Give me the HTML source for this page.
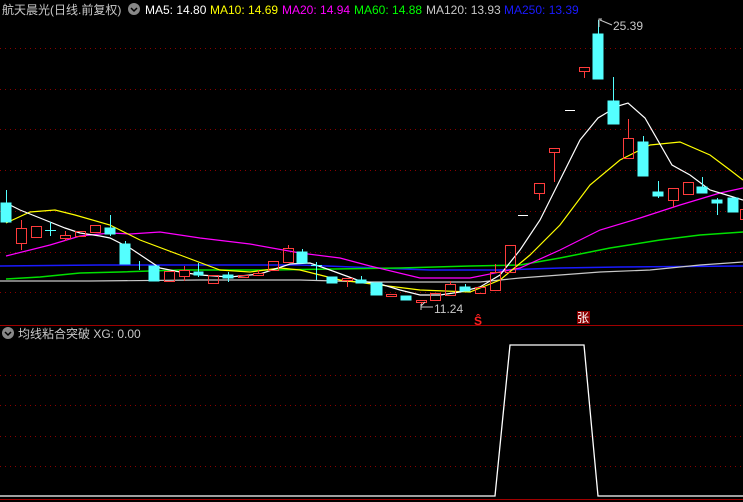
<!DOCTYPE html>
<html><head><meta charset="utf-8"><style>
html,body{margin:0;padding:0;background:#000;width:743px;height:502px;overflow:hidden}
svg{display:block}
text{font-family:"Liberation Sans","Noto Sans CJK SC",sans-serif;font-size:12px}
</style></head><body>
<svg width="743" height="502" viewBox="0 0 743 502" xmlns="http://www.w3.org/2000/svg">
<g stroke="#8b0000" stroke-dasharray="1,4" stroke-width="1">
<line x1="0" y1="48.5" x2="743" y2="48.5"/><line x1="0" y1="89.5" x2="743" y2="89.5"/>
<line x1="0" y1="129.5" x2="743" y2="129.5"/><line x1="0" y1="170.5" x2="743" y2="170.5"/>
<line x1="0" y1="211.5" x2="743" y2="211.5"/><line x1="0" y1="252.5" x2="743" y2="252.5"/>
<line x1="0" y1="292.5" x2="743" y2="292.5"/>
<line x1="0" y1="375.5" x2="743" y2="375.5"/><line x1="0" y1="405.5" x2="743" y2="405.5"/>
<line x1="0" y1="436.5" x2="743" y2="436.5"/><line x1="0" y1="466.5" x2="743" y2="466.5"/>
</g>
<line x1="0" y1="325.5" x2="743" y2="325.5" stroke="#a00000"/>
<line x1="0" y1="499.5" x2="743" y2="499.5" stroke="#a00000"/>
<!-- MAs -->
<g fill="none" stroke-width="1.2">
<polyline stroke="#1a1aff" stroke-width="1.5" points="0,266 100,265 200,265 300,265 430,270 500,270 560,268 620,267 743,266"/>
<polyline stroke="#c8c8c8" points="0,281 90,281 200,280 300,280 370,282 480,282 520,278 560,275 600,272 650,270 700,265 743,262"/>
<polyline stroke="#00e000" stroke-width="1.5" points="6,279 40,277 80,273 120,272 180,270 270,270 400,268 470,266 520,265 560,258 610,248 660,240 700,235 743,232"/>
<polyline stroke="#ff00ff" points="6,256 50,245 80,236 110,233 130,234 160,232 200,238 250,244 300,253 340,258 370,266 420,278 470,278 520,268 560,250 600,230 640,218 680,205 720,193 743,188"/>
<polyline stroke="#ffff00" points="6,223 30,212 55,210 75,215 110,225 140,240 180,255 220,270 250,272 280,268 300,270 340,280 380,285 420,290 470,292 500,280 530,255 560,225 590,185 620,160 650,145 680,142 710,155 730,170 743,180"/>
<polyline stroke="#ffffff" points="6,203 20,210 40,218 65,228 80,233 100,236 110,238 130,248 145,258 160,268 180,272 200,275 230,277 260,274 290,264 310,263 330,270 360,281 380,284 400,290 420,295 440,295 460,292 480,287 500,275 520,250 540,220 560,180 580,140 598,118 618,106 628,103 645,118 672,165 690,175 710,190 730,196 743,200"/>
</g>
<!-- candles: cyan filled -->
<g fill="#54ffff" stroke="#54ffff">
<line x1="6.5" y1="190" x2="6.5" y2="203"/><rect x="1" y="203" width="10" height="19"/>
<line x1="50.5" y1="222" x2="50.5" y2="236"/><line x1="45" y1="230.5" x2="56" y2="230.5"/>
<line x1="110.5" y1="215" x2="110.5" y2="236"/><rect x="105" y="228" width="10" height="6"/>
<line x1="125.5" y1="241" x2="125.5" y2="244"/><rect x="120" y="244" width="10" height="20"/>
<line x1="139.5" y1="261" x2="139.5" y2="270"/>
<rect x="149" y="266" width="10" height="15"/>
<line x1="198.5" y1="263" x2="198.5" y2="277"/><rect x="194" y="272" width="9" height="3"/>
<line x1="228.5" y1="272" x2="228.5" y2="282"/><rect x="223" y="275" width="10" height="3"/>
<line x1="302.5" y1="249" x2="302.5" y2="263"/><rect x="297" y="252" width="10" height="11"/>
<line x1="316.5" y1="262" x2="316.5" y2="280"/><line x1="311" y1="265.5" x2="322" y2="265.5"/>
<rect x="327" y="277" width="10" height="6"/>
<line x1="361.5" y1="276" x2="361.5" y2="283"/><rect x="356" y="280" width="10" height="3"/>
<rect x="371" y="283" width="11" height="12"/>
<rect x="401" y="296" width="10" height="4"/>
<line x1="465.5" y1="284" x2="465.5" y2="291"/><rect x="460" y="287" width="10" height="4"/>
<line x1="598.5" y1="20" x2="598.5" y2="34"/><rect x="593" y="34" width="10" height="45"/>
<line x1="613.5" y1="77" x2="613.5" y2="101"/><rect x="608" y="101" width="11" height="23"/>
<line x1="643.5" y1="136" x2="643.5" y2="142"/><rect x="638" y="142" width="10" height="34"/>
<line x1="658.5" y1="181" x2="658.5" y2="198"/><rect x="653" y="192" width="10" height="4"/>
<line x1="702.5" y1="177" x2="702.5" y2="193"/><rect x="697" y="187" width="10" height="6"/>
<line x1="717.5" y1="198" x2="717.5" y2="215"/><rect x="712" y="200" width="10" height="3"/>
<rect x="728" y="198" width="10" height="14"/>
</g>
<!-- red hollow -->
<g fill="none" stroke="#ff3c3c">
<line x1="21.5" y1="220" x2="21.5" y2="250"/><rect x="16.5" y="228.5" width="10" height="15" fill="#000"/>
<rect x="31.5" y="226.5" width="10" height="11"/>
<line x1="65.5" y1="231" x2="65.5" y2="241"/><rect x="60.5" y="235.5" width="10" height="3" fill="#000"/>
<rect x="75.5" y="231.5" width="10" height="5"/>
<rect x="90.5" y="225.5" width="10" height="7"/>
<rect x="164.5" y="271.5" width="10" height="10"/>
<line x1="184.5" y1="266" x2="184.5" y2="281"/><rect x="179.5" y="270.5" width="10" height="6" fill="#000"/>
<rect x="208.5" y="275.5" width="10" height="8"/>
<rect x="238.5" y="275.5" width="10" height="2"/>
<line x1="258.5" y1="270" x2="258.5" y2="276"/><rect x="253.5" y="273.5" width="10" height="2" fill="#000"/>
<rect x="268.5" y="261.5" width="10" height="9"/>
<line x1="288.5" y1="245" x2="288.5" y2="248"/><rect x="283.5" y="248.5" width="10" height="14"/>
<line x1="347.5" y1="278" x2="347.5" y2="287"/><rect x="342.5" y="278.5" width="10" height="2" fill="#000"/>
<rect x="386.5" y="294.5" width="10" height="2"/>
<line x1="421.5" y1="300" x2="421.5" y2="305"/><rect x="416.5" y="300.5" width="10" height="2" fill="#000"/>
<rect x="430.5" y="293.5" width="10" height="7"/>
<line x1="450.5" y1="281" x2="450.5" y2="284"/><rect x="445.5" y="284.5" width="10" height="11"/>
<rect x="475.5" y="287.5" width="10" height="6"/>
<line x1="495.5" y1="264" x2="495.5" y2="272"/><rect x="490.5" y="272.5" width="10" height="18"/>
<rect x="505.5" y="245.5" width="10" height="27"/>
<line x1="539.5" y1="193" x2="539.5" y2="200"/><rect x="534.5" y="183.5" width="10" height="10"/>
<line x1="554.5" y1="152" x2="554.5" y2="182"/><rect x="549.5" y="148.5" width="10" height="4"/>
<line x1="584.5" y1="71" x2="584.5" y2="78"/><rect x="579.5" y="67.5" width="10" height="4"/>
<line x1="628.5" y1="119" x2="628.5" y2="138"/><rect x="623.5" y="138.5" width="10" height="20"/>
<line x1="673.5" y1="200" x2="673.5" y2="207"/><rect x="668.5" y="188.5" width="10" height="12"/>
<rect x="683.5" y="182.5" width="10" height="12"/>
<rect x="740.5" y="209.5" width="10" height="10"/>
</g>
<line x1="518" y1="215.5" x2="528" y2="215.5" stroke="#fff"/>
<line x1="565" y1="110.5" x2="575" y2="110.5" stroke="#fff"/>
<!-- labels -->
<path d="M599 27 V19 H602 M600 20 L612 25" stroke="#c8c8c8" fill="none"/>
<text x="613" y="30" fill="#c8c8c8">25.39</text>
<path d="M421 304 V310 M421 307 H433 M421 306 L425 302" stroke="#c8c8c8" fill="none"/>
<text x="434" y="313" fill="#c8c8c8">11.24</text>
<text x="474" y="325" fill="#ff2020" font-size="11" font-weight="bold">Ŝ</text>
<rect x="577" y="311" width="13" height="13" fill="#8b0000"/>
<text x="577" y="322" fill="#fff" font-size="11">张</text>
<!-- bottom indicator -->
<polyline fill="none" stroke="#fff" stroke-width="1.3" points="0,496 495,496 510,345 584,345 598,496 743,496"/>
<!-- header -->
<text x="2" y="14" fill="#c8c8c8" font-size="13">航天晨光(日线.前复权)</text>
<circle cx="134" cy="9" r="6" fill="#888"/><path d="M131 8 L134 11 L137 8" stroke="#000" stroke-width="1.5" fill="none"/>
<text x="145" y="14" fill="#fff">MA5: 14.80</text>
<text x="210" y="14" fill="#ffff00">MA10: 14.69</text>
<text x="282" y="14" fill="#ff00ff">MA20: 14.94</text>
<text x="354" y="14" fill="#00ff00">MA60: 14.88</text>
<text x="426" y="14" fill="#c8c8c8">MA120: 13.93</text>
<text x="504" y="14" fill="#1a1aff">MA250: 13.39</text>
<circle cx="8" cy="333" r="6" fill="#888"/><path d="M5 332 L8 335 L11 332" stroke="#000" stroke-width="1.5" fill="none"/>
<text x="18" y="338" fill="#c8c8c8">均线粘合突破  XG: 0.00</text>
</svg>
</body></html>
